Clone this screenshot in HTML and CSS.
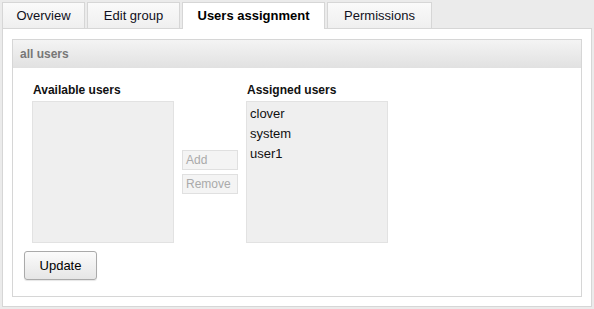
FILE: index.html
```html
<!DOCTYPE html>
<html>

<head>
    <title>Group users</title>
    <link rel="stylesheet" href="styles.css">
</head>

<body>
    <div class="tabs">
        <div class="tab tab-overview">Overview</div>
        <div class="tab tab-edit">Edit group</div>
        <div class="tab tab-users active">Users assignment</div>
        <div class="tab tab-perms">Permissions</div>
    </div>
    <div class="panel">
        <div class="box">
            <div class="box-header">all users</div>
            <div class="box-body">
                <div class="assign">
                    <div class="col">
                        <div class="col-title">Available users</div>
                        <div class="listbox"></div>
                    </div>
                    <div class="moves">
                        <button class="move" disabled>Add</button>
                        <button class="move" disabled>Remove</button>
                    </div>
                    <div class="col">
                        <div class="col-title">Assigned users</div>
                        <div class="listbox">
                            <div class="item">clover</div>
                            <div class="item">system</div>
                            <div class="item">user1</div>
                        </div>
                    </div>
                </div>
                <button class="update">Update</button>
            </div>
        </div>
    </div>
</body>

</html>
```

FILE: styles.css
```css
body {
    margin: 0;
    padding: 2px 2px 0 2px;
    background: #ebebeb;
    font-family: 'Liberation Sans', Arial, sans-serif;
    font-size: 13px;
    color: #111;
}

.tabs {
    display: flex;
    gap: 2px;
    height: 26px;
}

.tab {
    box-sizing: border-box;
    height: 26px;
    padding-top: 5px;
    text-align: center;
    border: 1px solid #d6d6d6;
    border-bottom: none;
    background: linear-gradient(#fafafa, #efefef);
    color: #101020;
}

.tab-overview {
    width: 83px;
}

.tab-edit {
    width: 93px;
}

.tab-users {
    width: 143px;
}

.tab-perms {
    width: 105px;
}

.tab.active {
    height: 27px;
    background: #fff;
    font-weight: bold;
    color: #000;
    position: relative;
    z-index: 1;
}

.panel {
    box-sizing: border-box;
    height: 279px;
    width: 590px;
    background: #fff;
    border: 1px solid #d6d6d6;
    padding: 10px 9px 10px 9px;
}

.box {
    box-sizing: border-box;
    height: 258px;
    border: 1px solid #d6d6d6;
}

.box-header {
    height: 28px;
    line-height: 28px;
    padding-left: 7px;
    background: linear-gradient(#f4f4f4, #e1e1e1);
    color: #777;
    font-weight: bold;
    font-size: 12px;
}

.box-body {
    padding: 15px 0 0 11px;
}

.assign {
    display: flex;
    gap: 8px;
    padding-left: 8px;
}

.col {
    width: 142px;
}

.col-title {
    font-weight: bold;
    font-size: 12px;
    padding-left: 1px;
    height: 18px;
}

.listbox {
    box-sizing: border-box;
    height: 142px;
    background: #efefef;
    border: 1px solid #e2e2e2;
    padding: 2px 0 0 3px;
}

.item {
    line-height: 20px;
}

.moves {
    display: flex;
    flex-direction: column;
    gap: 4px;
    padding-top: 67px;
    width: 56px;
}

.move {
    box-sizing: border-box;
    height: 20px;
    width: 56px;
    text-align: left;
    padding: 0 3px;
    font-family: 'Liberation Sans', Arial, sans-serif;
    font-size: 12px;
    color: #aaa;
    background: #f4f4f4;
    border: 1px solid #e0e0e0;
}

.update {
    box-sizing: border-box;
    margin-top: 8px;
    height: 29px;
    width: 73px;
    font-family: 'Liberation Sans', Arial, sans-serif;
    font-size: 13px;
    color: #000;
    background: linear-gradient(#fbfbfb, #e6e6e6);
    border: 1px solid #aaa;
    border-radius: 3px;
    box-shadow: 0 1px 1px rgba(0, 0, 0, 0.1);
}
```
